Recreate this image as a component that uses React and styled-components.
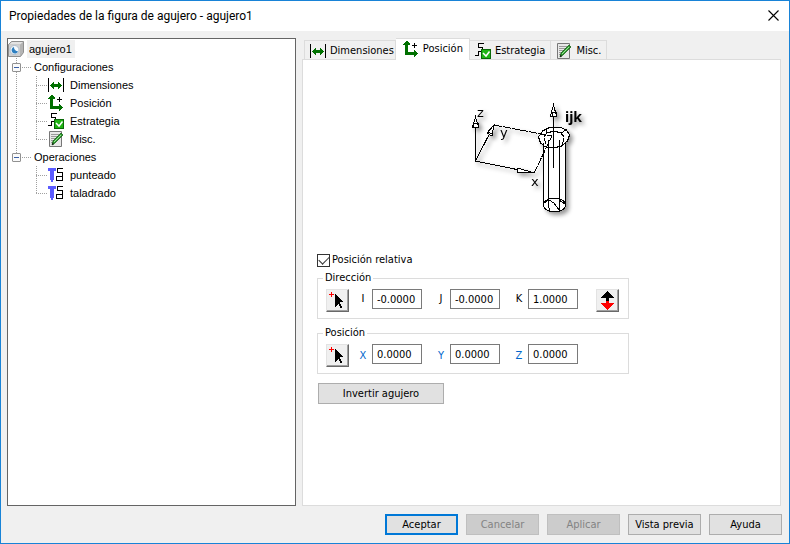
import { useState } from 'react';
import styled, { createGlobalStyle, css } from 'styled-components';

const GlobalStyle = createGlobalStyle`
	* {
		box-sizing: border-box;
	}

	body {
		margin: 0;
		color: #000;
		font-family: 'DejaVu Sans Condensed', 'DejaVu Sans', sans-serif;
		font-size: 11px;
		line-height: 14px;
	}

	button,
	input {
		color: inherit;
		font: inherit;
	}
`;

const DimensionsIcon = () => (
	<svg width="16" height="16" viewBox="0 0 16 16" shapeRendering="crispEdges">
		<path d="M0 1h1v14H0zM15 1h1v14h-1z" fill="#000" />
		<path
			d="M2 8h1V7h1V6h1V5h1v2h4V5h1v1h1v1h1v1h1v1h-1v1h-1v1h-1v1h-1v-2H6v2H5v-1H4v-1H3V9H2z"
			fill="#007000"
		/>
	</svg>
);

const PositionIcon = () => (
	<svg width="16" height="16" viewBox="0 0 16 16" shapeRendering="crispEdges">
		<path
			d="M3 0h2v1h1v1h1v2H5v7h6V9h1v1h1v1h1v1h1v1h-1v1h-1v1h-1v1h-1v-2H2V4H0V3h1V2h1V1h1z"
			fill="#007000"
		/>
		<path d="M11 2h1v2h2v1h-2v2h-1V5H9V4h2z" fill="#000" />
	</svg>
);

const StrategyIcon = () => (
	<svg width="16" height="16" viewBox="0 0 16 16" shapeRendering="crispEdges">
		<path d="M9 .5H3.5v4h4v4h-4v4H0" fill="none" stroke="#000" />
		<rect x="6.5" y="6.5" width="9" height="9" fill="#1fb414" stroke="#0a6a08" />
		<path
			d="M8 10l3 3 3.5-4.5"
			fill="none"
			stroke="#fff"
			strokeWidth="1.5"
			shapeRendering="auto"
		/>
	</svg>
);

const NotesIcon = () => (
	<svg width="16" height="16" viewBox="0 0 16 16">
		<path d="M1.5.5h12v15h-12z" fill="#e8e8e8" stroke="#777" />
		<path
			d="M3 3.5h8M3 5.5h7M3 7.5h5M3 9.5h4M3 11.5h2"
			stroke="#9a9a9a"
			shapeRendering="crispEdges"
		/>
		<path d="M4 14l1-4 8-8 2 2-8 8z" fill="#2f9a2f" stroke="#0c550c" strokeWidth=".7" />
		<path d="M6 11l7-7" stroke="#9be39b" />
		<path d="M4 14l.6-2.2 1.5 1.5z" fill="#111" />
	</svg>
);

const OperationIcon = () => (
	<svg width="16" height="16" viewBox="0 0 16 16" shapeRendering="crispEdges">
		<path d="M0 1h8v3H6v9H5v2H3v-2H2V4H0z" fill="#5b5bff" />
		<path d="M15 1.5H9.5v4h5v4h-6v4H15M14.500 9v4" fill="none" stroke="#000" />
	</svg>
);

const HoleIcon = () => (
	<svg width="16" height="16" viewBox="0 0 16 16">
		<path d="M.5 3.5l3-3h12v11l-3 4H.5z" fill="#b4b4b4" stroke="#8f8f8f" />
		<path d="M1 3.5L4 1h11l-3 2.5z" fill="#e3e3e3" />
		<path d="M1 4h11v11H1z" fill="#d0d0d0" />
		<circle cx="6.5" cy="9" r="4.5" fill="#f5f9fc" stroke="#aebccc" />
		<path d="M6 6a3.3 3.3 0 1 0 4 4.3A4 4 0 0 1 6 6z" fill="#2e7fc0" />
	</svg>
);

const PickIcon = () => (
	<svg width="19" height="19" viewBox="0 0 19 19" shapeRendering="crispEdges">
		<path d="M3 1h1v2h2v1H4v2H3V4H1V3h2z" fill="#f00" />
		<path
			d="M7 3h1v1h1v1h1v1h1v1h1v1h1v1h1v1h1v1h-3v2h1v2h1v2h-2v-2h-1v-2h-1v1H9v1H8v1H7z"
			fill="#000"
		/>
	</svg>
);

const FlipIcon = () => (
	<svg width="19" height="19" viewBox="0 0 19 19" shapeRendering="crispEdges">
		<path d="M9 0h1v1h1v1h1v1h1v1h1v1h1v1h1v1h-5v3H8V7H3V6h1V5h1V4h1V3h1V2h1V1h1z" fill="#000" />
		<path
			d="M8 10h3v2h5v1h-1v1h-1v1h-1v1h-1v1h-1v1h-1v1H9v-1H8v-1H7v-1H6v-1H5v-1H4v-1H3v-1h5z"
			fill="#f00"
		/>
	</svg>
);

const CloseIcon = () => (
	<svg width="11" height="11" viewBox="0 0 11 11">
		<path d="M.5.5l10 10M10.5.5l-10 10" stroke="#000" strokeWidth="1.1" />
	</svg>
);

const Drawing = styled.svg`
	display: block;
	filter: drop-shadow(3px 3px 2px rgba(0, 0, 0, 0.4));

	& text {
		font-family: 'DejaVu Sans', sans-serif;
		font-size: 13px;
	}

	& .vector {
		font-family: 'Noto Sans', sans-serif;
		font-size: 14px;
		font-weight: bold;
	}
`;

const HoleDrawing = () => (
	<Drawing width="130" height="135" viewBox="0 0 130 135" role="img" aria-label="ijk">
		<g fill="none" stroke="#000" shapeRendering="crispEdges">
			<path d="M83.5 52v63a11 7 0 0 0 22 0V52z" fill="#fff" stroke="none" />
			<path d="M78.5 47l4-6 8-4h9l7 3 3 5-2 6-6 5-8 2-8-1-5-4z" fill="#fff" />
			<path d="M84 47l3-4 7-2 7 2 3 4M87 43l-1-4M101 43l5-3M104 48l-2 8M84 48l2 6" />
			<path d="M83.5 53v62M88.5 50v66M99.5 50v71M105.5 53v62" />
			<ellipse cx="94.5" cy="115" rx="11" ry="7" />
			<path d="M84 113l5-3 5 3 6 8M99 110l6 4M90 121l-2-7" />
			<path d="M15.5 71V28M15.5 71L34 35M15.5 71L74 83" />
			<path d="M34 35l58 11M74 83l18-37" strokeDasharray="8 1" />
			<path d="M15.5 27l-3 10h6z" fill="#fff" />
			<path d="M34 35l-7 8 5 3z" fill="#fff" />
			<path d="M74 83l-16-5-1 4z" fill="#fff" />
			<path d="M13 33h5v4h-5zM28 42l4 2" />
			<path d="M93.5 78V15" />
			<path d="M93.5 15l-3 11h6z" fill="#fff" />
			<path d="M92 22h4v4h-4z" />
		</g>
		<text x="17" y="27">z</text>
		<text x="40" y="47">y</text>
		<text x="71" y="96">x</text>
		<text className="vector" x="105" y="32">ijk</text>
	</Drawing>
);

const Window = styled.div`
	display: flex;
	flex-direction: column;
	min-height: 100vh;
	border: 1px solid #1883d7;
	background: #f0f0f0;
`;

const TitleBar = styled.header`
	display: flex;
	align-items: center;
	justify-content: space-between;
	height: 30px;
	padding: 0 10px 0 8px;
	background: #fff;
`;

const Title = styled.h1`
	margin: 0;
	font-family: Roboto, 'Open Sans', sans-serif;
	font-size: 12px;
	font-weight: normal;
	line-height: 16px;
`;

const CloseButton = styled.button`
	display: flex;
	padding: 0 0 2px;
	border: 0;
	background: none;
`;

const Content = styled.main`
	display: grid;
	flex: 1;
	grid-template-columns: 289px 1fr;
	gap: 6px;
	padding: 7px 8px 8px 6px;
`;

const Tree = styled.nav`
	border: 1px solid #646464;
	padding-top: 1px;
	background: #fff;
	font-family: 'Liberation Sans', Arial, sans-serif;
`;

const TreeRow = styled.div`
	display: flex;
	align-items: center;
	height: 18px;
`;

const TreeLabel = styled.span`
	padding: 2px 3px 2px 2px;
	margin-left: ${({ $gap }) => $gap}px;
	background: ${({ $selected }) => ($selected ? '#f0f0f0' : 'none')};
`;

// dotted connector: vertical part at $x, horizontal part from $x to the right edge
const Guide = styled.span`
	display: flex;
	flex: none;
	align-items: center;
	width: ${({ $width }) => $width}px;
	height: 18px;
	padding-left: 4px;
	background-image: repeating-linear-gradient(#a0a0a0 0 1px, transparent 1px 2px),
		repeating-linear-gradient(90deg, #a0a0a0 0 1px, transparent 1px 2px);
	background-position:
		${({ $x }) => $x}px 0,
		${({ $x }) => $x}px 9px;
	background-repeat: no-repeat;
	background-size:
		1px ${({ $last }) => ($last ? '10px' : '100%')},
		${({ $through }) => ($through ? '0 0' : '100% 1px')};
	${({ $empty }) => $empty && 'background-image: none;'}
`;

const Toggle = styled.button`
	display: flex;
	align-items: center;
	justify-content: center;
	width: 9px;
	height: 9px;
	padding: 0;
	border: 1px solid #919191;
	border-radius: 1px;
	background: #fafafa;

	&::before {
		width: 5px;
		height: 1px;
		background: #3b5fa5;
		content: '';
	}
`;

const Tabs = styled.section`
	display: flex;
	flex-direction: column;
`;

const TabList = styled.div`
	display: flex;
	align-items: flex-end;
	height: 21px;
	padding-left: 2px;
`;

const Tab = styled.button`
	display: flex;
	align-items: center;
	gap: 4px;
	height: 19px;
	padding: 2px 5px 0;
	border: 1px solid #dcdcdc;
	border-bottom: 0;
	border-left-width: 0;
	background: #f0f0f0;

	&:first-child {
		padding-right: 1px;
		border-left-width: 1px;
	}

	${({ $active }) =>
		$active &&
		css`
			z-index: 1;
			height: 22px;
			margin-bottom: -1px;
			padding: 0 6px 2px 7px;
			background: #fff;
		`}
`;

const TabPanel = styled.div`
	flex: 1;
	padding: 30px 14px;
	border: 1px solid #dcdcdc;
	background: #fff;
`;

const Figure = styled.div`
	display: flex;
	justify-content: center;
	padding-right: 34px;
	margin-bottom: 28px;
`;

const Form = styled.div`
	width: 312px;
`;

const CheckLabel = styled.label`
	display: flex;
	align-items: center;
	gap: 2px;
	margin-bottom: 4px;
`;

const Checkbox = styled.input`
	display: grid;
	width: 13px;
	height: 13px;
	margin: 0;
	border: 1px solid #333;
	background: #fff;
	appearance: none;

	&:checked::before {
		width: 9px;
		height: 5px;
		margin: 2px 1px;
		border-bottom: 1px solid #333;
		border-left: 1px solid #333;
		transform: translateY(-1px) rotate(-45deg);
		content: '';
	}
`;

const Group = styled.fieldset`
	min-width: 0;
	padding: 4px 9px 6px 8px;
	margin: 0 0 7px;
	border: 1px solid #dcdcdc;

	& legend {
		padding: 0 2px;
		margin-left: -3px;
	}
`;

const FieldRow = styled.div`
	display: flex;
	align-items: flex-start;
`;

const IconButton = styled.button`
	display: flex;
	align-items: center;
	justify-content: center;
	width: 23px;
	height: 23px;
	padding: 0;
	margin-left: ${({ $end }) => ($end ? 'auto' : 0)};
	border: 1px solid;
	border-color: #e3e3e3 #696969 #696969 #e3e3e3;
	background: #f0f0f0;
	box-shadow: inset -1px -1px #a0a0a0;
`;

const Field = styled.label`
	display: flex;
	align-items: center;
	margin-left: ${({ $first }) => ($first ? 9 : 14)}px;
	color: ${({ $color }) => $color};

	& span {
		width: 10px;
		padding-top: ${({ $low }) => ($low ? 4 : 0)}px;
		margin-right: 4px;
		text-align: center;
	}
`;

const NumberInput = styled.input`
	width: 50px;
	height: 20px;
	padding: 0 4px;
	border: 1px solid #7a7a7a;
	background: #fff;
	color: #000;
`;

const Button = styled.button`
	width: 73px;
	height: 21px;
	padding: 0;
	border: ${({ $primary }) => ($primary ? '2px solid #0078d7' : '1px solid #adadad')};
	background: #e1e1e1;

	&:disabled {
		border-color: #bfbfbf;
		background: #ccc;
		color: #838383;
	}
`;

const InvertButton = styled(Button)`
	width: 126px;
	margin: 2px 0 0 1px;
`;

const Footer = styled.footer`
	display: flex;
	justify-content: flex-end;
	gap: 8px;
	padding: 0 7px 8px;
`;

const tabs = [
	{ label: 'Dimensiones', Icon: DimensionsIcon },
	{ label: 'Posición', Icon: PositionIcon },
	{ label: 'Estrategia', Icon: StrategyIcon },
	{ label: 'Misc.', Icon: NotesIcon },
];

const operations = [
	{ label: 'punteado', Icon: OperationIcon },
	{ label: 'taladrado', Icon: OperationIcon },
];

const TreeBranch = ({ label, items, last }) => {
	const [open, setOpen] = useState(true);

	return (
		<>
			<TreeRow>
				<Guide $width={24} $x={8} $last={last}>
					<Toggle aria-label={label} aria-expanded={open} onClick={() => setOpen(!open)} />
				</Guide>
				<TreeLabel $gap={0}>{label}</TreeLabel>
			</TreeRow>
			{open &&
				items.map(({ label, Icon }, index) => (
					<TreeRow key={label}>
						<Guide $width={24} $x={8} $through $empty={last} />
						<Guide $width={16} $x={4} $last={index === items.length - 1} />
						<Icon />
						<TreeLabel $gap={4}>{label}</TreeLabel>
					</TreeRow>
				))}
		</>
	);
};

const VectorGroup = ({ title, fields, color, low, children }) => {
	const [values, setValues] = useState(fields);

	return (
		<Group>
			<legend>{title}</legend>
			<FieldRow>
				<IconButton type="button" aria-label={title}>
					<PickIcon />
				</IconButton>
				{Object.keys(values).map((name, index) => (
					<Field key={name} $first={index === 0} $color={color} $low={low}>
						<span>{name}</span>
						<NumberInput
							value={values[name]}
							onChange={({ target }) => setValues({ ...values, [name]: target.value })}
						/>
					</Field>
				))}
				{children}
			</FieldRow>
		</Group>
	);
};

export default function App() {
	const [activeTab, setActiveTab] = useState('Posición');
	const [relative, setRelative] = useState(true);

	return (
		<>
			<GlobalStyle />
			<Window>
				<TitleBar>
					<Title>Propiedades de la figura de agujero - agujero1</Title>
					<CloseButton aria-label="Cerrar">
						<CloseIcon />
					</CloseButton>
				</TitleBar>

				<Content>
					<Tree>
						<TreeRow>
							<HoleIcon />
							<TreeLabel $gap={3} $selected>
								agujero1
							</TreeLabel>
						</TreeRow>
						<TreeBranch label="Configuraciones" items={tabs} />
						<TreeBranch label="Operaciones" items={operations} last />
					</Tree>

					<Tabs>
						<TabList role="tablist">
							{tabs.map(({ label, Icon }) => (
								<Tab
									key={label}
									role="tab"
									aria-selected={label === activeTab}
									$active={label === activeTab}
									onClick={() => setActiveTab(label)}
								>
									<Icon />
									{label}
								</Tab>
							))}
						</TabList>
						<TabPanel role="tabpanel">
							<Figure>
								<HoleDrawing />
							</Figure>
							<Form>
								<CheckLabel>
									<Checkbox
										type="checkbox"
										checked={relative}
										onChange={() => setRelative(!relative)}
									/>
									Posición relativa
								</CheckLabel>
								<VectorGroup
									title="Dirección"
									fields={{ I: '-0.0000', J: '-0.0000', K: '1.0000' }}
								>
									<IconButton type="button" aria-label="Invertir" $end>
										<FlipIcon />
									</IconButton>
								</VectorGroup>
								<VectorGroup
									title="Posición"
									fields={{ X: '0.0000', Y: '0.0000', Z: '0.0000' }}
									color="#0066cc"
									low
								/>
								<InvertButton>Invertir agujero</InvertButton>
							</Form>
						</TabPanel>
					</Tabs>
				</Content>

				<Footer>
					<Button $primary>Aceptar</Button>
					<Button disabled>Cancelar</Button>
					<Button disabled>Aplicar</Button>
					<Button>Vista previa</Button>
					<Button>Ayuda</Button>
				</Footer>
			</Window>
		</>
	);
}
